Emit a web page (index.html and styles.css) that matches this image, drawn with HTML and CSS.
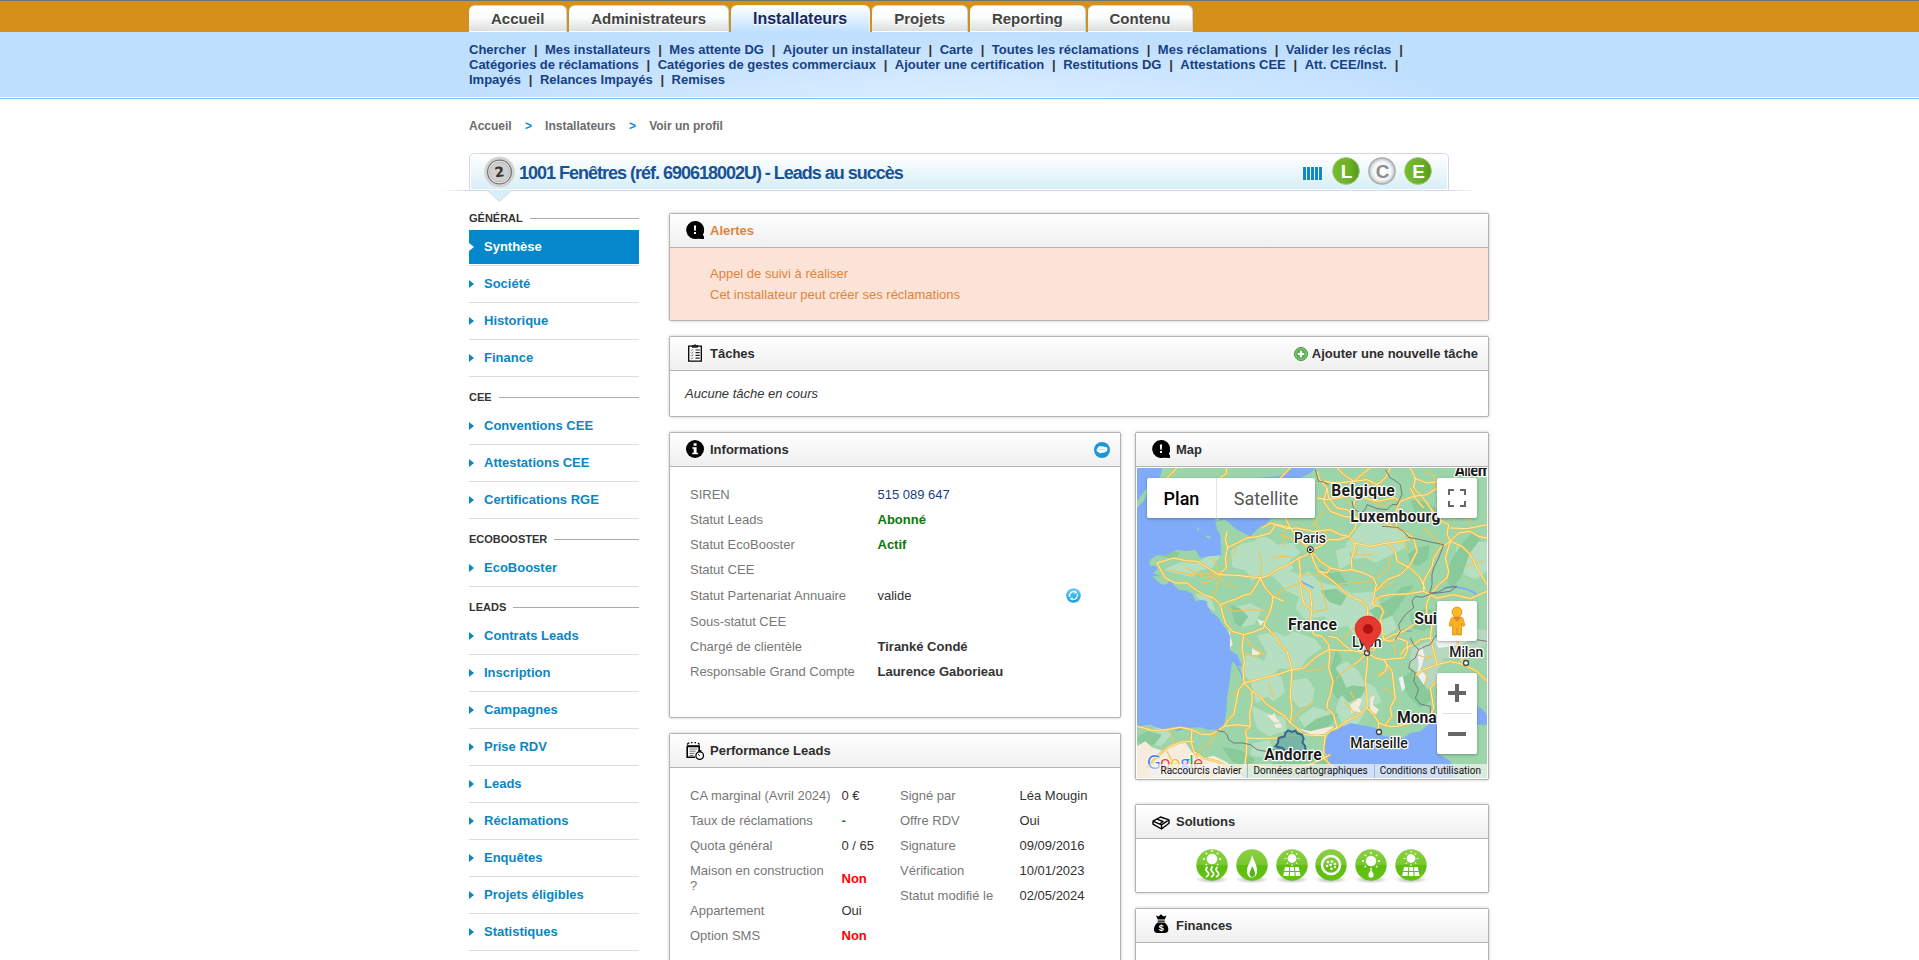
FILE: index.html
```html
<!DOCTYPE html>
<html lang="fr">
<head>
<meta charset="utf-8">
<title>Voir un profil</title>
<link rel="stylesheet" href="styles.css">
</head>
<body>
<svg class="defs" width="0" height="0" aria-hidden="true">
  <defs>
    <linearGradient id="gGreen" x1="0" y1="0" x2="0" y2="1"><stop offset="0" stop-color="#8ad040"/><stop offset=".48" stop-color="#7ac833"/><stop offset=".52" stop-color="#5dbd12"/><stop offset="1" stop-color="#62c40e"/></linearGradient>
    <linearGradient id="gBadge" x1="0" y1="0" x2="1" y2="0"><stop offset="0" stop-color="#77bc2c"/><stop offset=".6" stop-color="#6cb125"/><stop offset="1" stop-color="#549a1a"/></linearGradient>
    <radialGradient id="gGrey"><stop offset="0" stop-color="#fff"/><stop offset=".7" stop-color="#f2f5f6"/><stop offset="1" stop-color="#b9bcbe"/></radialGradient>
    <radialGradient id="gShadow"><stop offset="0" stop-color="#999" stop-opacity=".8"/><stop offset="1" stop-color="#999" stop-opacity="0"/></radialGradient>
    <linearGradient id="gSky" x1="0" y1="0" x2="0" y2="1"><stop offset="0" stop-color="#6ccdf5"/><stop offset="1" stop-color="#0f9fe0"/></linearGradient>
    <g id="disc"><ellipse cx="18" cy="31.5" rx="17" ry="4" fill="url(#gShadow)"/><circle cx="18" cy="17" r="15.700" fill="url(#gGreen)"/></g>
    <g id="rays" stroke="#fff" stroke-width="1.300"><path d="M0-9v2M0 7v2M-9 0h2M7 0h2M-6.400-6.400l1.500 1.500M6.400-6.400l-1.500 1.500M-6.400 6.400l1.500-1.500M6.400 6.400l-1.500-1.500"/></g>
    <g id="panels" fill="#fff"><path d="M12 19h4.300l-.3 3.900h-4.800zM17.300 19h3.800l.2 3.900h-4.200zM22.100 19h3.600l.9 3.900h-4.300zM11 23.900h4.900l-.3 4.200h-5.400zM17 23.900h4.400l.2 4.200h-4.800zM22.500 23.900h4.300l.9 4.200h-5z"/></g>
    <symbol id="alert" viewBox="0 0 18 18"><path d="M9 0a9 9 0 1 0 2.500 17.700L18 18v-2.500l-1.200-1.800A9 9 0 0 0 9 0z"/><path d="M7.900 4.500h2.200l-.3 5.200H8.200zM8 11h2v2H8z" fill="#fff"/></symbol>
  </defs>
</svg>

<div class="topbar">
  <nav class="tabs wrap">
    <a class="tab">Accueil</a><a class="tab">Administrateurs</a><a class="tab tab-on">Installateurs</a><a class="tab">Projets</a><a class="tab">Reporting</a><a class="tab">Contenu</a>
  </nav>
</div>
<div class="subbar">
  <nav class="subnav wrap">
    <div class="subrow"><a>Chercher</a><a>Mes installateurs</a><a>Mes attente DG</a><a>Ajouter un installateur</a><a>Carte</a><a>Toutes les réclamations</a><a>Mes réclamations</a><a>Valider les réclas</a></div>
    <div class="subrow"><a>Catégories de réclamations</a><a>Catégories de gestes commerciaux</a><a>Ajouter une certification</a><a>Restitutions DG</a><a>Attestations CEE</a><a>Att. CEE/Inst.</a></div>
    <div class="subrow last"><a>Impayés</a><a>Relances Impayés</a><a>Remises</a></div>
  </nav>
</div>

<div class="wrap">
  <div class="crumbs"><span>Accueil</span><i>&gt;</i><span>Installateurs</span><i>&gt;</i><span>Voir un profil</span></div>

  <header class="titlebar">
    <svg class="coin" width="32" height="46" viewBox="0 0 32 46">
      <path d="M4 34h23L15.500 45z" fill="#d5eef7"/><path d="M4 35l11.500 10.500L27 35" fill="none" stroke="#cdd3e6" stroke-width="1"/>
      <circle cx="15.500" cy="16" r="15.300" fill="#d3d3d3"/><circle cx="15.500" cy="16" r="12.500" fill="#777"/><circle cx="15.500" cy="16" r="11.200" fill="#f2f2f2"/><circle cx="15.500" cy="16" r="10" fill="#d0d0d0" stroke="#999" stroke-width=".6"/>
      <text x="15.500" y="21" class="coin-num" transform="rotate(-8 15 16)">2</text>
    </svg>
    <h1>1001 Fenêtres (réf. 690618002U) - Leads au succès</h1>
    <svg class="bars" width="19" height="13" viewBox="0 0 19 13"><path d="M1.500 0v13M5.500 0v13M9.500 0v13M13.500 0v13M17.500 0v13" stroke="#0b85c4" stroke-width="2.900"/></svg>
    <svg class="badge" width="28" height="28" viewBox="0 0 28 28"><circle cx="14" cy="14" r="13.400" fill="url(#gBadge)" stroke="#a7c98a"/><text x="14.500" y="20.500">L</text></svg>
    <svg class="badge grey" width="28" height="28" viewBox="0 0 28 28"><circle cx="14" cy="14" r="13.200" fill="url(#gGrey)" stroke="#aaa" stroke-width="1.300"/><text x="14.500" y="20.500">C</text></svg>
    <svg class="badge" width="28" height="28" viewBox="0 0 28 28"><circle cx="14" cy="14" r="13.400" fill="url(#gBadge)" stroke="#a7c98a"/><text x="14.500" y="20.500">E</text></svg>
  </header>

  <div class="columns">
    <aside class="side">
      <h2><span>Général</span></h2>
      <a class="on">Synthèse</a><a>Société</a><a>Historique</a><a>Finance</a>
      <h2><span>CEE</span></h2>
      <a>Conventions CEE</a><a>Attestations CEE</a><a>Certifications RGE</a>
      <h2><span>EcoBooster</span></h2>
      <a>EcoBooster</a>
      <h2><span>Leads</span></h2>
      <a>Contrats Leads</a><a>Inscription</a><a>Campagnes</a><a>Prise RDV</a><a>Leads</a><a>Réclamations</a><a>Enquêtes</a><a>Projets éligibles</a><a>Statistiques</a>
    </aside>

    <main class="main">
      <section class="panel alerts">
        <h3><svg width="18" height="18"><use href="#alert"/></svg>Alertes</h3>
        <div class="body"><p>Appel de suivi à réaliser</p><p>Cet installateur peut créer ses réclamations</p></div>
      </section>
      <section class="panel tasks">
        <h3><svg width="18" height="18" viewBox="0 0 18 18"><path d="M2.700 2.200h12.600v15H2.700z" fill="#fff" stroke="#000" stroke-width="1.300"/><path d="M6 1h2l1-1 1 1h2v2.700H6z" fill="#222"/><path d="M9.500 6h4.200M9.500 8.700h4.200M9.500 11.400h4.200M9.500 14.100h4.200" stroke="#222" stroke-width="1.200"/><path d="M4.700 5.700l1 1L7.500 5M4.700 8.400l1 1 1.800-1.700M4.700 11.100l1 1 1.800-1.700M4.700 13.800l1 1 1.800-1.700" fill="none" stroke="#555" stroke-width=".8"/></svg>Tâches
          <span class="add"><svg width="14" height="14" viewBox="0 0 14 14"><circle cx="7" cy="7" r="6.500" fill="#55b04c" stroke="#429639"/><circle cx="7" cy="7" r="5.400" fill="none" stroke="#a5d89e" stroke-width=".7"/><path d="M7 3.800v6.400M3.800 7h6.400" stroke="#fff" stroke-width="2.200"/></svg>Ajouter une nouvelle tâche</span></h3>
        <div class="body">Aucune tâche en cours</div>
      </section>

      <div class="split">
        <div class="left">
          <section class="panel info">
            <h3><svg width="18" height="18" viewBox="0 0 18 18"><circle cx="9" cy="9" r="9"/><path d="M7.600 3.200h3v2.600h-3zM6.300 7.200h4.300v5.500h1.300v1.600H6.200v-1.600h1.500V8.800H6.300z" fill="#fff"/></svg>Informations
              <svg class="sf" width="16" height="16" viewBox="0 0 16 16"><circle cx="8" cy="8" r="8" fill="#1a97d9"/><path d="M4.500 4.700c1-.9 2.400-.7 3 0 1-.8 2.200-.6 2.800.2 1.800-.5 3.200.6 3.200 2.400s-1.300 2.700-2.500 2.600c-.7 1-1.800 1.200-2.700.7-1 1-3 1-3.600-.4C3.300 10.200 2.500 9.300 2.700 8c0-.9.300-1.500.9-1.800-.1-.6.300-1.200.9-1.500z" fill="#fff"/><path d="M4.500 7.700h7" stroke="#9bd0ee" stroke-width="1" stroke-dasharray="1.200 .5"/></svg></h3>
            <div class="body">
              <dl>
                <div><dt>SIREN</dt><dd class="link">515 089 647</dd></div>
                <div><dt>Statut Leads</dt><dd class="green">Abonné</dd></div>
                <div><dt>Statut EcoBooster</dt><dd class="green">Actif</dd></div>
                <div><dt>Statut CEE</dt><dd></dd></div>
                <div class="tall"><dt>Statut Partenariat Annuaire</dt><dd>valide</dd><svg width="15" height="15" viewBox="0 0 15 15"><circle cx="7.500" cy="7.500" r="7.300" fill="url(#gSky)"/><path d="M3.800 9A3.900 3.900 0 0 1 9 4M11.200 6A3.900 3.900 0 0 1 6 11" fill="none" stroke="#fff" stroke-width="1.300"/><path d="M8.500 2.200l3 2.200-3 1.400zM6.500 12.800l-3-2.200 3-1.400z" fill="#fff"/></svg></div>
                <div><dt>Sous-statut CEE</dt><dd></dd></div>
                <div><dt>Chargé de clientèle</dt><dd class="bold">Tiranké Condé</dd></div>
                <div><dt>Responsable Grand Compte</dt><dd class="bold">Laurence Gaborieau</dd></div>
              </dl>
            </div>
          </section>
          <section class="panel perf">
            <h3><svg width="18" height="18" viewBox="0 0 18 18"><path d="M1.200 4.500h12v4M1.200 4.500v10.800h8" fill="none" stroke="#000" stroke-width="1.600"/><path d="M1 2.500 2.500 1h1M5 .6h1.500M8.500.6H10M12 1l1.500 1.500" fill="none" stroke="#000" stroke-width="1.200"/><path d="M.8 3.300h12.900V5H.8z"/><path d="M3.500 7h7.500M3.500 9.200h6M3.500 11.400h5M3.500 13.500h4" stroke="#777" stroke-width="1"/><circle cx="13.700" cy="13.600" r="3.800" fill="#fff" stroke="#000" stroke-width="1.300"/><path d="M12 9h3.400" stroke="#000" stroke-width="1.600"/><path d="M13.700 13.800l-1.700-1.600" stroke="#000"/></svg>Performance Leads</h3>
            <div class="body two">
              <dl>
                <div><dt>CA marginal (Avril 2024)</dt><dd>0 €</dd></div>
                <div><dt>Taux de réclamations</dt><dd class="green">-</dd></div>
                <div><dt>Quota général</dt><dd>0 / 65</dd></div>
                <div><dt>Maison en construction<br>?</dt><dd class="red">Non</dd></div>
                <div><dt>Appartement</dt><dd>Oui</dd></div>
                <div><dt>Option SMS</dt><dd class="red">Non</dd></div>
              </dl>
              <dl>
                <div><dt>Signé par</dt><dd>Léa Mougin</dd></div>
                <div><dt>Offre RDV</dt><dd>Oui</dd></div>
                <div><dt>Signature</dt><dd>09/09/2016</dd></div>
                <div><dt>Vérification</dt><dd>10/01/2023</dd></div>
                <div><dt>Statut modifié le</dt><dd>02/05/2024</dd></div>
              </dl>
            </div>
          </section>
        </div>

        <div class="right">
          <section class="panel mapbox">
            <h3><svg width="18" height="18"><use href="#alert"/></svg>Map</h3>
            <div class="map">
              <svg class="mapart" width="350" height="310" viewBox="0 0 1050 930">
                <defs>
                  <g id="roads">
                    <path d="M520 246L508 262 485 270 455 290 420 305 395 322 370 330 335 326 300 322 245 320M370 330L358 352 340 378 320 382 300 392 275 400 250 410M370 330L385 360 408 385 405 410 400 430 385 460 380 480 350 492 320 500 315 540 322 580 318 610 322 645"/>
                    <path d="M520 246L530 280 545 310 575 330 600 350 625 375 650 390 675 400 690 415 692 445 700 470 692 495 690 520 692 555 690 600 685 640 690 680 690 720 660 745 630 758 600 780 580 788 565 803 530 802 500 800 480 780 460 765 445 745 420 730 385 705 370 685 345 670 322 645 305 665 300 690 290 740 275 755 262 775 240 790 220 800 190 798 165 785 130 778 90 785 50 788 0 775"/>
                    <path d="M520 246L485 210 460 180 430 172 400 165 375 180M460 180L435 130 420 90 380 60M520 246L550 235 575 215 605 215 635 205 655 180 660 150 630 125 600 120 575 90 570 60 548 35 540 10M635 205L655 225 650 250 643 275 645 305 680 315 710 330 718 350 705 410M650 225L700 235 750 225 780 222 820 215M520 246L550 280 580 300 615 308 645 305M580 300L570 315 545 310M485 270L490 310 488 340 500 355 520 370 522 395 525 420M440 400L408 385M490 350L495 385 502 410 525 425 520 460 530 500 555 505 575 530 578 565 575 600 588 640 580 680 572 700 570 720 590 740 600 780"/>
                    <path d="M270 190L265 215 272 240 265 270 268 300 245 320M268 240L300 225 330 210 365 205 400 195 415 170 450 182 480 180 530 190 580 185 610 200 635 205M245 320L210 298 180 280 145 278 110 270 60 285 85 330 115 345 150 345 180 368 200 380 230 390 250 410 258 440 265 465 285 490 320 500"/>
                    <path d="M575 545L540 565 500 600 465 605 420 620 380 630 322 645M465 605L462 650 460 690 465 725 460 765M380 470L410 500 430 530 450 550 465 605M575 545L620 548 645 548 690 555M645 548L620 530 600 510 575 505M690 555L665 580 650 590M692 555L715 570 740 575 770 572 800 570 812 545 810 520 780 510 760 520 740 515 705 550M740 575L765 610 770 650 775 690 760 720 765 745 745 770M740 575L750 590 745 610 725 625M740 515L770 500 800 490 830 470 850 455 870 440M780 510L790 480M262 775L300 770 340 775 338 735 345 705 345 670M340 775L325 790 330 810 375 812 420 810 460 802 500 800M565 803L560 840 560 870 575 885 590 900M165 785L162 820 170 850 190 890 200 930M170 820L130 822 90 840 60 865 30 900M170 850L200 870 240 880 280 900 320 910 328 860 330 810M200 930L270 905 340 890 410 900 480 900 530 885 580 860"/>
                    <path d="M705 410L730 415 740 430 730 455 735 480 740 515M705 410L730 385 760 380 810 378 860 370 860 340 870 320 885 295 890 270 910 240 940 220 930 200 935 170 900 150 880 120 855 85 830 60 835 30 820 0M860 370L900 390 950 380 1000 392 1050 370M940 220L965 195 1000 190 1025 205 1050 210M940 180L990 182 1050 170M750 225L775 250 780 280 820 300 850 330 865 365M715 370L750 335 790 320 820 290 840 250 830 210 800 190 780 180 730 160 690 158 640 150M780 180L772 140 790 100 755 80 720 50 690 35 650 40 620 20 600 0M790 100L830 85 870 80 900 60 920 30M720 50L745 30 760 0M820 60L835 90 860 120M560 40L600 45 650 40 680 15 700 0M570 60L560 100 580 130 620 145 660 150M660 80L650 110 650 160M540 90L570 95 600 90 650 80 720 100 770 90M830 30L870 45 910 40M1050 350L1020 300 1000 260 975 235 940 220M940 220L925 270 935 310 930 330 905 350 880 380 868 410 870 440 885 470 880 510 850 515 830 530 805 540 790 560M880 510L890 550 900 590 860 605 830 625M900 590L940 580 980 590 1020 610 1050 640M980 590L965 550 960 500 945 450 930 400M900 640L880 660 890 720 880 740M690 720L710 740 725 765 755 775 780 775 820 765 860 740 900 740M725 765L725 790M120 0L100 20 70 50 50 90M270 0L268 15 250 30M460 0L430 30"/>
                  </g>
                </defs>
                <path d="M0 0h1050v930H0z" fill="#9bd5a9"/>
                <g class="pale">
                  <path d="M90 305l40-18 50 3 30-20 35-8-20 34-40 8-20 20zM285 250l30-20 40-6 10-18 30 8 25 20 45-5 20 25-30 20 10 25-30 25-50-5-40 15-15-30-40-10zM410 320l40-10 45 15 20-10 30 30 60 15 40 20 60-5 20 30-20 30 10 40-60 25-20-30-50 5-20-35-60 10-25-30 10-35-40-20z"/>
                  <path d="M365 505l50-10 30 15 25-15 60 20 20 25-45 30-20 35-60-10-15 20-30-25 15-35zM330 560l45 20 25 35 30 15 10 40-30 25-20-15-30 20-15-60-20-20zM600 600l30-15 30 25 15 30 35 20 20 40-40 15-30 50-40 5-20-45 15-40zM680 165l50-10 40 25 30 15 5 40-40 20-50 25-30-15-30 5-25-40 20-25z"/>
                  <path d="M470 640l40-5 20 30-10 40-30 10-25-25zM960 240l40-15 50 0v80l-35 25-45-20zM30 790l50-10 20 20-30 30-50-10zM350 830l45-10 10 25-20 20-40-5zM600 250l30-10 10 40-30 20zM720 440l40 0 15 40-30 20-20-20zM300 420l40-10 30 15-20 40-40 10zM350 720l40 20 50 10 5 35-50 15-30-20-10-30zM490 750l40-30 45 15-10 45-50 10zM180 380l40 15 10 30-30-20z"/>
                </g>
                <g class="dark">
                  <path d="M600 550l12 25-20 25 20 30 15 35-25 25-15-25-5-60zM930 330l15-50 30-50 30-30 20 15-30 40-20 60-30 45zM550 300l25 20 30-5 25 35-45-10zM555 370l40-5 30 20-15 25-30-10zM700 430l40-25 30-15 25-30 30-5-30 40-30 45-35 15zM820 440l45-15 35 5v35l-40 20-30-5z"/>
                  <path d="M815 260l30-20 30-5-5 35-25 20-20-5zM500 785l40-30 30-10 30-5-20 25-30 25zM70 262l25-10 30 2-10 15zM285 415l25 10 20 20-20 30-15-15zM790 640l30-25 30-20 20 50 10 50-30 20-30-30zM400 865l50-5 60 0 50-5 10 40-60 15-90 0zM825 100l40 5 35 20-5 30-30-5-30-20zM610 670l35-15 40 5-15 25-35 15zM0 812l30-20 40 10-20 25-30 10zM260 840l50 10 40 25-10 20-50-15z"/>
                </g>
                <path d="M825 540l45-20 40 5 10 60-20 20 10 40-40 20-25-45-30-30zM880 510l70-10 40-15 60 0v40l-40 30-60 15-60 0z" fill="#b7d8bf"/>
                <path d="M840 550l15-15 8 30-13 40 20 20-10 25-20-30 5-30zM785 630l12-5 8 35-10 10zM895 520l30-10 60-5 10 15-50 15-40 5z" fill="#eef1ef"/>
                <path d="M0 835l25-15 20 18 30 10 30-20 40-5 20 30 35 18 30-8 40 20 30 30 30 20H0zM480 780l40 10 40-10 30-5-12 20-50 8zM390 740l15 2 8-8 4 16 12 12-15 2-12-10zM640 710l25-20 10 5-10 25 10 15-20-6-12 8zM700 690l12-8-5 28 18 15-8 14-18-4zM360 450l8 6 14 4-12 14zM345 540l12 8 14 6-8 8-18-2zM275 480l12 50-10 10zM410 770l20-5 6 12-16 4z" fill="#f5ecdb"/>
                <path class="sea" d="M0 120V0h75L70 25 25 65 0 100zM0 120L20 100 30 75V150H234L236 165 250 150H400L370 175 340 205 300 185 265 155 235 160 240 185 250 200 253 262 215 265 190 270 175 245 148 250 120 245 90 260 60 262 38 275 38 293 55 293 62 303 48 315 72 325 45 325 62 340 75 350 90 348 100 335 110 350 125 365 145 368 165 375 175 400 195 395 210 400 212 415 225 435 240 445 265 480 280 505 278 545 300 560 314 590 310 598 285 580 278 640 270 690 268 730 262 765 250 780 240 785 215 785 190 778 150 780 120 790 105 778 80 785 40 770 0 775z"/>
                <path class="sea" d="M355 30L425 25 460 5V0H535L520 15 480 35 450 60 400 70V155L375 180 372 165 400 150H355zM1050 740L1035 722 1020 715 1010 735 960 750 880 765 850 790 820 795 800 810 775 808 740 805 715 780 690 775 640 765 620 775 600 785 580 792 565 815 555 845 570 860 575 890 560 930H960L940 880 900 855 1005 850 1020 770 1050 770z"/>
                <path d="M950 870l25-12 30-5 3 40-8 37h-48zM180 178l8 4-6 6zM208 202l14 4-4 6-10-4z" fill="#9bd5a9"/>
                <path d="M276 570q20 10 28 30l15 30M780 500q15-15 45-10M920 360q60-10 100 20M490 340l40 20" fill="none" stroke="#7baaf7" stroke-width="5"/>
                <path class="minor" d="M245 320L200 316 160 320 95 305M245 320L225 340 190 345M245 320L240 360 220 400M245 320L262 345 300 360M245 320L240 295 225 270M245 320L205 330 150 300M380 60L340 50 300 30M400 430L350 425 290 430 250 410M320 500L340 530 380 560M395 645L400 665 410 690M460 765L485 735 530 700M365 250L375 290 370 330M440 180V240M400 270L440 265 485 270M600 630L620 610 650 590M620 510L650 480M715 370L770 340M760 600L720 620M560 130L540 155 520 180M600 40L615 75 640 110M680 20L700 55 690 90M860 180L885 205 920 230M980 300L1010 285 1040 280M1000 60L990 110 1000 170M740 660L765 675 780 700M660 745L640 720 620 700M485 320L545 322M408 385L450 360 490 345M530 430L570 425 560 380 545 315M660 240L655 260 710 262M760 265L755 300 720 330M320 560L360 565 385 550M280 680L315 672M860 10L895 25 890 70M700 100L735 115 770 100M630 60L655 95M800 210L810 250M960 60L970 120 950 160M1020 90L1000 150M300 230L290 260 270 280M430 200L470 215 510 235M530 160L550 185 575 200M595 350L640 345 700 340M770 520L775 560M840 560L870 570 900 560M870 610L865 650M640 670L655 700M500 610L545 605 570 590M100 790L110 830M240 790L215 830 180 845M90 850L110 890 180 880"/>
                <use href="#roads" class="road-o"/><use href="#roads" class="road-i"/>
                <path d="M535 5L545 40 560 42 575 50M745 5L760 30 775 38 790 50 795 80 780 110 765 110 750 125 720 122 690 110 685 125 670 135 650 122 645 100M735 175L780 178 800 190 815 208 850 215 880 222 920 230 905 270 890 300 885 320 885 350 878 375 905 372 930 358 960 355 940 370 880 378 855 388 835 385 825 400 830 420 805 440 785 470 790 490 775 515M820 510L830 530 845 545 865 535 880 530 890 512 900 500 930 508 960 500 1000 512 1050 520M845 545L835 570 820 580 815 600 835 615 830 640 845 665 835 690 850 708 880 715 880 735M240 788L262 792 270 800 275 815 290 825 315 825 340 830 360 845 385 850 415 843 440 840" fill="none" stroke="#747b7b" stroke-width="3"/>
                <path d="M415 835l8-10 2-15 18-5 2-10 8-8 12 5 10-4 6 8 14 4 5 12-4 12 8 10 2 14-18 3-8 6-20-7-16-2-8-8z" fill="#6ea9a5" fill-opacity=".75" stroke="#336a94" stroke-width="6"/>
                <g class="country"><text x="953" y="24" textLength="110">Allem</text><text x="583" y="84" textLength="190">Belgique</text><text x="640" y="162" textLength="270">Luxembourg</text><text x="453" y="486" textLength="147">France</text><text x="832" y="469">Suisse</text><text x="780" y="766">Monaco</text><text x="382" y="876" textLength="172">Andorre</text></g>
                <g class="city"><text x="471" y="225" textLength="96">Paris</text><text x="645" y="537" textLength="89">Lyon</text><text x="937" y="567" textLength="102">Milan</text><text x="640" y="840" textLength="172">Marseille</text></g>
                <text x="415" y="940" class="faint">Barcelone</text>
                <circle cx="520" cy="245" r="9" fill="#fff" stroke="#111" stroke-width="3"/><circle cx="520" cy="245" r="4"/>
                <g fill="#fff" stroke="#444" stroke-width="4"><circle cx="690" cy="555" r="7.500"/><circle cx="987" cy="585" r="7.500"/><circle cx="726" cy="792" r="7.500"/></g>
                <path d="M693 555c-3-26-39-46-39-73a39 38 0 0 1 78 0c0 27-36 47-39 73z" fill="#e7392f" stroke="#c4271e" stroke-width="2"/><circle cx="693" cy="483" r="15" fill="#ad1413"/>
                <text class="google" x="30" y="904" textLength="168"><tspan fill="#4285f4">G</tspan><tspan fill="#ea4335">o</tspan><tspan fill="#fbbc05">o</tspan><tspan fill="#4285f4">g</tspan><tspan fill="#34a853">l</tspan><tspan fill="#ea4335">e</tspan></text>
              </svg>
              <div class="maptype"><b>Plan</b><span>Satellite</span></div>
              <div class="ctl full"><svg width="18" height="18" viewBox="0 0 18 18"><path d="M1 6V1h5M12 1h5v5M17 12v5h-5M6 17H1v-5" fill="none" stroke="#666" stroke-width="2"/></svg></div>
              <div class="ctl peg"><svg width="18" height="30" viewBox="0 0 18 30"><path d="M4.500 11h9l1.500 1.500 2 7-2 1-1.500-3V29h-4v-7h-1v7h-4V17.500l-1.500 3-2-1 2-7z" fill="#f9b11e" stroke="#d08a1c" stroke-width=".7"/><path d="M5 11h8l-4 5z" fill="#e2842d"/><circle cx="9" cy="6" r="5" fill="#fbb823" stroke="#d08a1c" stroke-width=".7"/></svg></div>
              <div class="ctl zoom"><svg width="40" height="81" viewBox="0 0 40 81"><path d="M11 20h18M20 11v18M11 61h18" stroke="#666" stroke-width="4"/><path d="M5 40.500h30" stroke="#e0e0e0"/></svg></div>
              <div class="legal"><span>Raccourcis clavier</span><span>Données cartographiques</span><span>Conditions d'utilisation</span></div>
            </div>
          </section>
          <section class="panel solutions">
            <h3><svg width="18" height="18" viewBox="0 0 18 18"><path d="M1 8.200L8.500 4 17 6.800v3.400L9.500 16 1 11.200zM1 8.200l8.500 3.600L17 6.800M9.500 11.800V16M5 6.200l6 2.300-3 2.200" fill="none" stroke="#000" stroke-width="1.400" stroke-linejoin="round"/></svg>Solutions</h3>
            <div class="body">
              <svg width="36" height="36"><use href="#disc"/><use href="#rays" x="18" y="11"/><circle cx="18" cy="11" r="5.300" fill="#fff"/><path d="M13.500 19q-3 2.700 0 5t-1.500 5M18.500 19q-3 2.700 0 5t-1.500 5M23.500 19q-3 2.700 0 5t-1.500 5" fill="none" stroke="#fff" stroke-width="1.700"/></svg>
              <svg width="36" height="36"><use href="#disc"/><path d="M18 7c2 6 5.500 10 5 17-.3 3-2 5-4.500 5.500S13 28 13 23c0-6 4-9 5-16z" fill="#fff"/><path d="M18.300 18c1 3 2.700 5 2.700 7.500 0 2-1 3.500-2.700 3.500s-2.700-1.500-2.700-3.500c0-2.500 1.900-4.500 2.700-7.500z" fill="#53b312"/></svg>
              <svg width="36" height="36"><use href="#disc"/><use href="#rays" transform="translate(18 10.500) scale(.82)"/><circle cx="18" cy="10.500" r="4.400" fill="#fff"/><use href="#panels" x="-1"/></svg>
              <svg width="36" height="36"><use href="#disc"/><circle cx="18" cy="17" r="9" fill="none" stroke="#fff" stroke-width="2.500"/><g fill="#fff"><circle cx="15" cy="14" r="1.300"/><circle cx="19" cy="13.500" r="1.300"/><circle cx="22" cy="16" r="1.300"/><circle cx="17.500" cy="17" r="1.300"/><circle cx="14" cy="18" r="1.300"/><circle cx="18.500" cy="20.800" r="1.300"/><circle cx="22" cy="19" r="1.100"/></g></svg>
              <svg width="36" height="36"><use href="#disc"/><use href="#rays" x="18" y="13"/><circle cx="18" cy="13" r="5.200" fill="#fff"/><path d="M18 21.500c1 2 2.600 3.500 2.600 5.500a2.600 2.600 0 0 1-5.200 0c0-2 1.700-3.500 2.600-5.500z" fill="#fff"/></svg>
              <svg width="36" height="36"><use href="#disc"/><use href="#rays" transform="translate(18 10.500) scale(.82)"/><circle cx="18" cy="10.500" r="4.400" fill="#fff"/><use href="#panels" x="-1"/></svg>
            </div>
          </section>
          <section class="panel fin">
            <h3><svg width="18" height="20" viewBox="0 0 18 20"><path d="M4 1.500l2.500 1L9 .3l2.500 2.200 3-1L12.700 5.500H5.700zM5.700 6.400h7v1.300h-7zM5.700 8.600h7c2.500 2 4 5 3.600 7.500-.3 2.300-1.800 3-3.500 3H5.500c-2.200 0-3.300-1-3.500-3-.4-2.500 1.200-5.700 3.700-7.500z"/><text x="9.200" y="17" class="dollar">$</text></svg>Finances</h3>
            <div class="body"></div>
          </section>
        </div>
      </div>
    </main>
  </div>
</div>
</body>
</html>
```

FILE: styles.css
```css
* { box-sizing: border-box; }
html, body { height: 960px; overflow: hidden; }
body { margin: 0; background: #fff; color: #333; font: 13px/15px "Liberation Sans", Arial, sans-serif; }
.defs { position: absolute; }
svg { display: block; flex: none; }
h1, h2, h3, p, dl, dd, dt { margin: 0; }
.wrap { width: 1020px; margin-left: 469px; }

/* top navigation */
.topbar { height: 32px; background: #d68f1a; border-top: 1px solid #6d7377; padding-top: 4px; }
.tabs { display: flex; gap: 2px; height: 27px; }
.tab { height: 27px; padding: 0 21.800px 0 22px; line-height: 26px; font-size: 15px; font-weight: bold; color: #444; background: linear-gradient(#fff 0%, #fbfdfd 45%, #dcdfdf 100%); border: 1px solid #b5dcf0; border-width: 1px 1px 1px 0; border-bottom-color: #fff; border-radius: 6px 6px 0 0; text-shadow: 0 1px 0 #fff; }
.tab-on { padding: 0 22px; font-size: 16px; line-height: 25px; color: #14285f; background: linear-gradient(#fff, #bfe0ff); border-color: #e6f4ff; border-bottom: 0; }
.subbar { height: 67px; background: radial-gradient(ellipse 520px 75px at 960px 76px, #dfeffe 0%, rgba(191,223,255,0) 100%), #bfdfff; border-bottom: 1px solid #83bdf0; box-shadow: inset 0 -1px 0 #fff; padding-top: 10px; }
.subrow { display: flex; height: 15px; color: #173f82; font-weight: bold; white-space: nowrap; }
.subrow a::after { content: "|"; color: #333; margin: 0 7.450px 0 7.800px; }
.subrow.last a:last-child::after { content: none; }

/* breadcrumb and title */
.crumbs { display: flex; margin-top: 20px; font-size: 12px; font-weight: bold; color: #6c6c6c; }
.crumbs i { font-style: normal; color: #0a8acb; margin: 0 13.200px; }
.titlebar { display: flex; align-items: center; width: 980px; height: 38px; margin-top: 19px; border: 1px solid #d3d6e8; border-radius: 5px 5px 0 0; background: linear-gradient(#fff, #d7eef6); box-shadow: inset 0 0 0 1px #fff; padding-right: 16px; position: relative; }
.titlebar::after { content: ""; position: absolute; left: -30px; right: -30px; bottom: -1px; height: 1px; background: linear-gradient(90deg, #fff, #d3d6e8 30px, #d3d6e8 calc(100% - 30px), #fff); }
.coin { position: relative; z-index: 1; margin: 13px 0 0 14px; }
.coin-num { font: bold 14px "DejaVu Sans", sans-serif; text-anchor: middle; fill: #333; }
h1 { flex: 1; margin: 2px 0 0 3px; font-size: 18px; line-height: 22px; letter-spacing: -1.010px; color: #1a5296; white-space: nowrap; }
.bars { margin: 2px 10px 0 0; }
.badge { margin: 0 0 2px 8px; }
.bars + .badge { margin-left: 0; }
.badge text { font: bold 19px "Liberation Sans", sans-serif; text-anchor: middle; fill: #fff; }
.badge.grey text { fill: #8c8c8c; }

/* side menu */
.columns { display: flex; gap: 30px; margin-top: 7px; }
.side { width: 170px; flex: none; }
.side h2 { display: flex; align-items: center; height: 31px; padding-top: 9px; font-size: 11px; line-height: 13px; text-transform: uppercase; }
.side h2::after { content: ""; flex: 1; height: 1px; margin-left: 7px; background: #aaa; }
.side a { display: block; position: relative; height: 37px; border-bottom: 1px solid #ddd; padding: 10px 0 0 15px; font-weight: bold; color: #0a86c4; }
.side a::before { content: ""; position: absolute; left: 0; top: 14px; border: 4.500px solid transparent; border-left: 5px solid #0a86c4; border-right: 0; }
.side a.on { color: #fff; background: linear-gradient(#fff 1px, #0588cb 1px, #0588cb 35px, #fff 35px); }
.side a.on::before { border-left-color: #fff; }

/* panels */
.main { width: 820px; padding-top: 15px; }
.panel { border: 1px solid #b4b4b4; box-shadow: 0 0 3px rgba(0,0,0,.25); border-radius: 2px; margin-bottom: 15px; background: #fff; }
.panel h3 { display: flex; align-items: center; height: 34px; padding: 0 10px 0 16px; gap: 6px; font-size: 13px; line-height: 15px; border-bottom: 1px solid #b4b4b4; background: linear-gradient(#fff, #efefef); color: #2d2d2d; }
.add { display: flex; align-items: center; gap: 4px; margin-left: auto; }
.alerts { height: 108px; }
.alerts h3, .alerts .body { color: #e0843c; }
.alerts h3 > svg { margin-top: -1px; fill: #000; }
.alerts .body { height: 72px; padding: 15px 0 0 40px; line-height: 21px; background: #fce3d7; }
.tasks { height: 81px; }
.tasks h3 > svg { margin-top: -1px; }
.tasks .body { padding: 15px; font-style: italic; }
.split { display: flex; gap: 14px; }
.left { width: 452px; }
.right { width: 354px; }
.info { height: 286px; }
.info h3 > svg:first-child, .mapbox h3 > svg { margin-top: -1px; }
.sf { margin-left: auto; }
.body dl > div { display: flex; align-items: center; min-height: 25px; padding: 5px 0; }
.info .body { padding: 15px 39px 0 20px; }
.info dt { width: 187.500px; }
dt { color: #777; }
.info .tall { height: 27px; }
.info .tall svg { margin-left: auto; }
.green { color: #087c08; font-weight: bold; }
.red { color: #f00; font-weight: bold; }
.bold { font-weight: bold; }
.link { color: #173f82; }
.perf { height: 260px; }
.two { display: flex; padding: 15px 0 0 20px; }
.two dt { width: 151.500px; white-space: nowrap; }
.two dl:first-child { width: 210px; }
.two dl:last-child dt { width: 119.500px; }

/* map */
.mapbox { height: 348px; margin-bottom: 24px; }
.map { position: relative; width: 350px; height: 310px; margin: 1px; overflow: hidden; font-family: Roboto, sans-serif; }
.pale { fill: #b5dfc0; stroke: #b5dfc0; stroke-width: 8px; stroke-linejoin: round; }
.dark { fill: #88ca99; stroke: #88ca99; stroke-width: 6px; stroke-linejoin: round; }
.sea { fill: #7fabf8; }
.road-o { fill: none; stroke: #f0bd4b; stroke-width: 7px; stroke-linejoin: round; }
.road-i { fill: none; stroke: #ffeea6; stroke-width: 3px; stroke-linejoin: round; }
.minor { fill: none; stroke: #f3c454; stroke-width: 3.500px; stroke-linejoin: round; }
.country text, .city text { paint-order: stroke; stroke: #fff; stroke-width: 7px; stroke-linejoin: round; fill: #1b1b1b; font-family: Roboto, sans-serif; }
.country text { font-size: 47px; font-weight: 700; }
.city text { font-size: 42px; font-weight: 500; }
.faint { font: 500 42px Roboto, sans-serif; fill: #999; }
.google { font: 56px Lato, "Open Sans", sans-serif; stroke: #fff; stroke-width: 4px; paint-order: stroke; }
.maptype { position: absolute; left: 10px; top: 10px; display: flex; width: 168px; height: 40px; background: #fff; border-radius: 2px; box-shadow: 0 1px 3px rgba(0,0,0,.3); font-size: 18px; line-height: 41px; text-align: center; }
.maptype b { width: 70px; font-weight: 500; color: #000; border-right: 1px solid #e6e6e6; }
.maptype span { flex: 1; color: #565656; }
.ctl { position: absolute; right: 10px; width: 40px; height: 40px; background: #fff; border-radius: 2px; box-shadow: 0 1px 3px rgba(0,0,0,.3); display: grid; place-items: center; }
.full { top: 10px; }
.peg { top: 133px; }
.zoom { top: 205px; height: 81px; }
.legal { position: absolute; right: 0; bottom: 0; display: flex; width: 350px; height: 14px; justify-content: flex-end; font-size: 10px; line-height: 14px; color: #111; background: linear-gradient(90deg, rgba(245,245,245,0), rgba(245,245,245,.7) 25px); }
.legal span { padding: 0 6px 0 5px; border-left: 1px solid #9bb8e8; white-space: nowrap; }
.legal span:first-child { border: 0; }

.solutions { height: 89px; }
.solutions .body { display: flex; justify-content: center; gap: 3.700px; padding: 9px 1px 0 0; }
.fin { height: 80px; }
.fin h3 svg { margin-top: -3px; }
.dollar { font: bold 9px "Liberation Sans", sans-serif; fill: #fff; text-anchor: middle; }
```
